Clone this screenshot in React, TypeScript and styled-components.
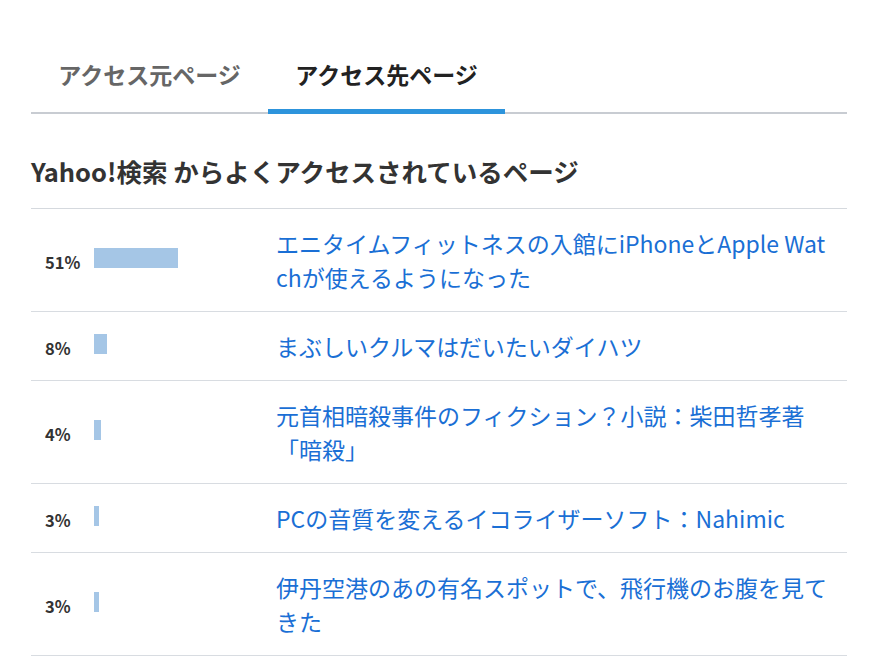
import React from "react";
import styled, { createGlobalStyle } from "styled-components";

const Global = createGlobalStyle`
  html, body { margin: 0; padding: 0; background: #fff; }
  body { font-family: "Noto Sans CJK JP", "Noto Sans", sans-serif; color: #333; }
`;

const Page = styled.div`
  width: 816px;
  margin: 0 0 0 31px;
  padding-top: 40px;
`;

const TabList = styled.div`
  display: flex;
  box-shadow: inset 0 -2px 0 #c8ccd2;
`;

const Tab = styled.div<{ $active?: boolean }>`
  width: 237px;
  text-align: center;
  font-size: 23px;
  font-weight: 700;
  line-height: 30px;
  padding: 19px 0 20px;
  color: ${(p) => (p.$active ? "#222" : "#666")};
  border-bottom: 5px solid ${(p) => (p.$active ? "#2d94dc" : "transparent")};
`;

const Heading = styled.h2`
  margin: 40px 0 0;
  padding-bottom: 20px;
  font-size: 25.5px;
  line-height: 34px;
  font-weight: 700;
  color: #333;
  border-bottom: 1px solid #d5d9de;
`;

const List = styled.div`
  display: flex;
  flex-direction: column;
`;

const Row = styled.div`
  display: flex;
  align-items: center;
  padding: 17px 0;
  border-bottom: 1px solid #d8dce1;
`;

const Stat = styled.div`
  width: 231px;
  padding-left: 14px;
  display: flex;
  align-items: center;
  flex-shrink: 0;
`;

const Percent = styled.span`
  width: 49px;
  font-size: 16.5px;
  font-weight: 700;
  color: #333;
  padding-top: 4px;
`;

const Bar = styled.div`
  height: 20px;
  background: #a5c6e6;
  margin-top: -4px;
`;

const Link = styled.a`
  flex: 1;
  padding-right: 15px;
  font-size: 23px;
  line-height: 34px;
  color: #1a6fd5;
  text-decoration: none;
  word-break: break-all;
`;

const rows = [
  { p: 51, t: "エニタイムフィットネスの入館にiPhoneとApple Watchが使えるようになった" },
  { p: 8, t: "まぶしいクルマはだいたいダイハツ" },
  { p: 4, t: "元首相暗殺事件のフィクション？小説：柴田哲孝著「暗殺」" },
  { p: 3, t: "PCの音質を変えるイコライザーソフト：Nahimic" },
  { p: 3, t: "伊丹空港のあの有名スポットで、飛行機のお腹を見てきた" },
];

export default function App() {
  return (
    <>
      <Global />
      <Page>
        <TabList>
          <Tab>アクセス元ページ</Tab>
          <Tab $active>アクセス先ページ</Tab>
        </TabList>
        <Heading>Yahoo!検索 からよくアクセスされているページ</Heading>
        <List>
          {rows.map((r, i) => (
            <Row key={i}>
              <Stat>
                <Percent>{r.p}%</Percent>
                <Bar style={{ width: `${Math.round(r.p * 1.65)}px` }} />
              </Stat>
              <Link href="#">{r.t}</Link>
            </Row>
          ))}
        </List>
      </Page>
    </>
  );
}
